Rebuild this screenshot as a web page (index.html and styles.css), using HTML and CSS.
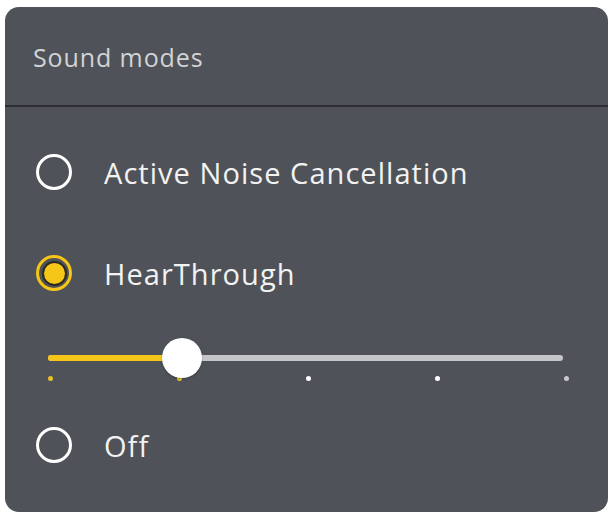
FILE: index.html
```html
<!DOCTYPE html>
<html>
<head>
<meta charset="utf-8">
<link rel="stylesheet" href="styles.css">
</head>
<body>
<div class="card">
  <div class="header"><span class="title">Sound modes</span></div>
  <div class="options">
    <div class="option first">
      <span class="radio"></span>
      <span class="label">Active Noise Cancellation</span>
    </div>
    <div class="option second">
      <span class="radio checked"><span class="dot"></span></span>
      <span class="label">HearThrough</span>
    </div>
    <div class="slider">
      <div class="track">
        <div class="fill" style="width:26%"></div>
        <div class="thumb" style="left:26%"></div>
      </div>
      <div class="ticks">
        <span class="tick on"></span>
        <span class="tick on"></span>
        <span class="tick"></span>
        <span class="tick"></span>
        <span class="tick last"></span>
      </div>
    </div>
    <div class="option third">
      <span class="radio"></span>
      <span class="label">Off</span>
    </div>
  </div>
</div>
</body>
</html>
```

FILE: styles.css
```css
html, body {
  margin: 0;
  padding: 0;
  background: #ffffff;
}
body {
  font-family: "Open Sans", "Noto Sans", sans-serif;
}
.card {
  margin: 7px 4px 0 5px;
  width: 603px;
  height: 505px;
  background: #4f5258;
  border-radius: 14px;
  box-sizing: border-box;
  display: flex;
  flex-direction: column;
  overflow: hidden;
}
.header {
  display: flex;
  align-items: center;
  padding-left: 28px;
  border-bottom: 2px solid #2c2e32;
  box-sizing: border-box;
  height: 100px;
}
.title {
  color: #d2d3d5;
  font-size: 25px;
  font-weight: 400;
  letter-spacing: 0.9px;
  margin-top: 2px;
}
.options {
  display: flex;
  flex-direction: column;
  padding-left: 31px;
}
.option {
  height: 70px;
  display: flex;
  align-items: center;
  gap: 32px;
}
.option.first { margin-top: 30px; }
.option.second { margin-top: 31px; }
.option.third { margin-top: 29px; }
.radio {
  width: 36px;
  height: 36px;
  border: 3px solid #ffffff;
  border-radius: 50%;
  box-sizing: border-box;
  display: flex;
  align-items: center;
  justify-content: center;
  flex: none;
}
.radio.checked {
  border-color: #f5c518;
  border-width: 3px;
}
.dot {
  width: 21px;
  height: 21px;
  border-radius: 50%;
  background: #f5c518;
  box-shadow: 0 0 0 2px #2b2a22;
}
.label {
  color: #f2f2f2;
  font-size: 29px;
  letter-spacing: 1.05px;
}
.slider {
  width: 521px;
  margin-left: 12px;
  margin-top: 47px;
  display: flex;
  flex-direction: column;
}
.track {
  position: relative;
  height: 6px;
  width: 515px;
  border-radius: 3px;
  background: #c4c5c7;
}
.fill {
  height: 100%;
  background: #f5c518;
  border-radius: 3px;
}
.thumb {
  position: absolute;
  top: 50%;
  width: 40px;
  height: 40px;
  border-radius: 50%;
  background: #ffffff;
  transform: translate(-50%, -50%);
  box-shadow: 0 1px 2px rgba(0,0,0,0.3);
}
.ticks {
  display: flex;
  justify-content: space-between;
  margin-top: 15px;
}
.tick {
  width: 5px;
  height: 5px;
  border-radius: 50%;
  background: #ffffff;
}
.tick.on { background: #e8c22a; }
.tick.last { background: #c8c9cb; }
```
